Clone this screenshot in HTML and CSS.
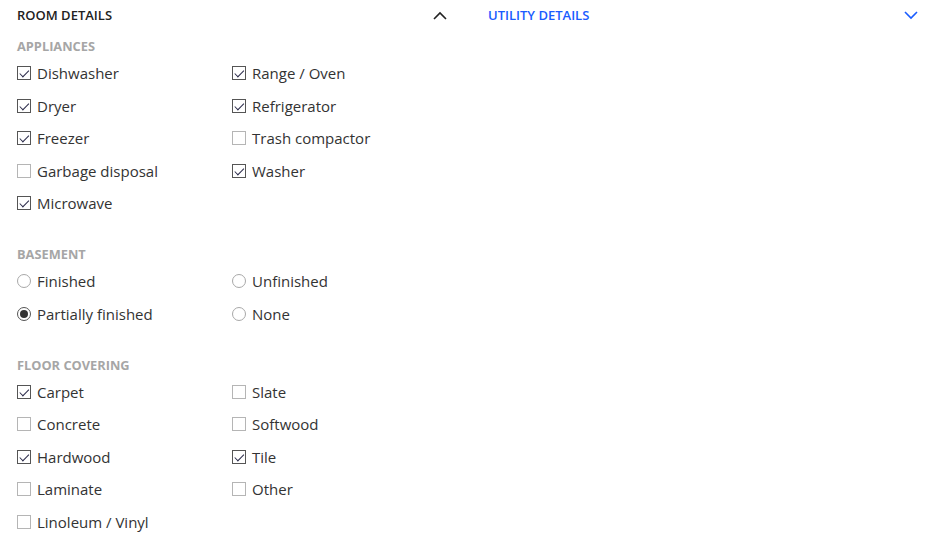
FILE: index.html
```html
<!DOCTYPE html>
<html>
<head>
<meta charset="utf-8">
<link rel="stylesheet" href="styles.css">
</head>
<body>
<div class="page">
  <section class="panel">
    <div class="panel-head">
      <span class="title">ROOM DETAILS</span>
      <svg class="chev" width="14" height="9" viewBox="0 0 14 9"><path d="M1 8 L7 2 L13 8" fill="none" stroke="#222" stroke-width="1.6"/></svg>
    </div>
    <div class="group">
      <div class="group-title">APPLIANCES</div>
      <div class="opts">
        <label class="opt"><span class="box on"></span>Dishwasher</label>
        <label class="opt"><span class="box on"></span>Range / Oven</label>
        <label class="opt"><span class="box on"></span>Dryer</label>
        <label class="opt"><span class="box on"></span>Refrigerator</label>
        <label class="opt"><span class="box on"></span>Freezer</label>
        <label class="opt"><span class="box"></span>Trash compactor</label>
        <label class="opt"><span class="box"></span>Garbage disposal</label>
        <label class="opt"><span class="box on"></span>Washer</label>
        <label class="opt"><span class="box on"></span>Microwave</label>
      </div>
    </div>
    <div class="group">
      <div class="group-title">BASEMENT</div>
      <div class="opts">
        <label class="opt"><span class="radio"></span>Finished</label>
        <label class="opt"><span class="radio"></span>Unfinished</label>
        <label class="opt"><span class="radio on"></span>Partially finished</label>
        <label class="opt"><span class="radio"></span>None</label>
      </div>
    </div>
    <div class="group">
      <div class="group-title">FLOOR COVERING</div>
      <div class="opts">
        <label class="opt"><span class="box on"></span>Carpet</label>
        <label class="opt"><span class="box"></span>Slate</label>
        <label class="opt"><span class="box"></span>Concrete</label>
        <label class="opt"><span class="box"></span>Softwood</label>
        <label class="opt"><span class="box on"></span>Hardwood</label>
        <label class="opt"><span class="box on"></span>Tile</label>
        <label class="opt"><span class="box"></span>Laminate</label>
        <label class="opt"><span class="box"></span>Other</label>
        <label class="opt"><span class="box"></span>Linoleum / Vinyl</label>
      </div>
    </div>
  </section>
  <section class="panel right">
    <div class="panel-head">
      <span class="title blue">UTILITY DETAILS</span>
      <svg class="chev" width="14" height="9" viewBox="0 0 14 9"><path d="M1 1 L7 7 L13 1" fill="none" stroke="#1a5cff" stroke-width="1.6"/></svg>
    </div>
  </section>
</div>
</body>
</html>
```
FILE: styles.css
```css
* { box-sizing: border-box; }
body {
  margin: 0;
  font-family: "Open Sans", "Noto Sans", sans-serif;
  color: #333;
  background: #fff;
}
.page {
  display: grid;
  grid-template-columns: 433px 430px;
  column-gap: 38px;
  padding: 0 17px;
}
.panel-head {
  display: flex;
  align-items: center;
  justify-content: space-between;
  height: 30px;
  padding-right: 3px;
}
.right .panel-head { padding-right: 0; }
.title {
  font-size: 13px;
  font-weight: 600;
  color: #222;
}
.title.blue { color: #1a5cff; }
.chev { display: block; }
.group { margin-bottom: 24.5px; }
.group-title {
  font-size: 12.8px;
  font-weight: 700;
  color: #a6a6a6;
  height: 21px;
  line-height: 20px;
  margin-top: 5px;
}
.panel-head + .group .group-title { margin-top: 6px; }
.opts {
  display: grid;
  grid-template-columns: 215px 215px;
}
.opt {
  display: flex;
  align-items: center;
  height: 32.5px;
  font-size: 15px;
  color: #333;
}
.box, .radio {
  width: 14px;
  height: 14px;
  margin-right: 6px;
  flex: none;
  position: relative;
}
.box { border: 1px solid #b5b5b5; }
.box.on { border-color: #555; }
.box.on::after {
  content: "";
  position: absolute;
  left: 3.5px;
  top: 1px;
  width: 4px;
  height: 7.5px;
  border: solid #2a2a4a;
  border-width: 0 1.6px 1.6px 0;
  transform: rotate(45deg);
}
.radio {
  border: 1px solid #a8a8a8;
  border-radius: 50%;
}
.radio.on { border-color: #555; }
.radio.on::after {
  content: "";
  position: absolute;
  left: 2px;
  top: 2px;
  width: 8px;
  height: 8px;
  border-radius: 50%;
  background: #333;
}
```
